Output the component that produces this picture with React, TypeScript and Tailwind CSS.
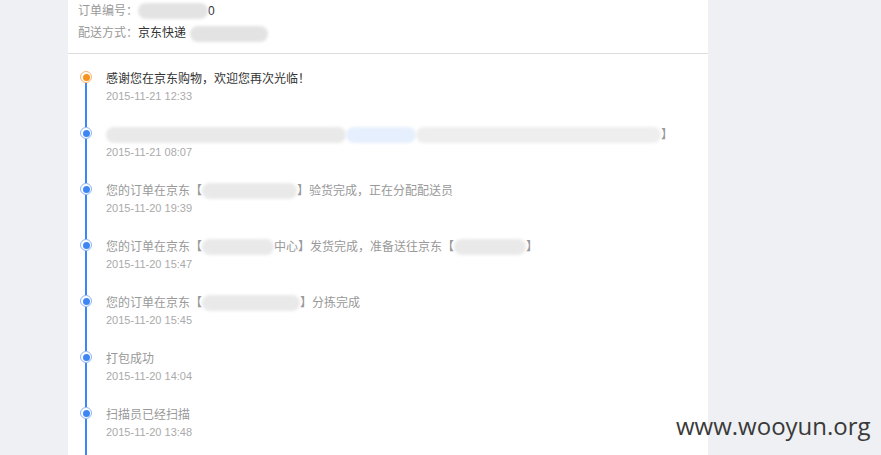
import React from 'react';

interface Step {
  time: string;
  content: React.ReactNode;
  active?: boolean;
}

const Blur: React.FC<{ w: number; tint?: string }> = ({ w, tint }) => (
  <span
    className={`inline-block h-[16px] rounded-full blur-[1.5px] align-middle ${tint ?? 'bg-[#e9e9e9]'}`}
    style={{ width: w }}
  />
);

const steps: Step[] = [
  { time: '2015-11-21 12:33', content: '感谢您在京东购物，欢迎您再次光临！', active: true },
  {
    time: '2015-11-21 08:07',
    content: (
      <>
        <Blur w={240} />
        <Blur w={70} tint="bg-[#e6effd]" />
        <Blur w={245} tint="bg-[#eeeeee]" />
        <span>】</span>
      </>
    ),
  },
  {
    time: '2015-11-20 19:39',
    content: (
      <>
        您的订单在京东【<Blur w={95} />】验货完成，正在分配配送员
      </>
    ),
  },
  {
    time: '2015-11-20 15:47',
    content: (
      <>
        您的订单在京东【<Blur w={72} />中心】发货完成，准备送往京东【<Blur w={72} />】
      </>
    ),
  },
  {
    time: '2015-11-20 15:45',
    content: (
      <>
        您的订单在京东【<Blur w={98} />】分拣完成
      </>
    ),
  },
  { time: '2015-11-20 14:04', content: '打包成功' },
  { time: '2015-11-20 13:48', content: '扫描员已经扫描' },
];

const Dot: React.FC<{ orange?: boolean }> = ({ orange }) => (
  <div
    className={`w-[12px] h-[12px] rounded-full border-[1.5px] bg-white flex items-center justify-center ${
      orange ? 'border-[#f9b36a]' : 'border-[#8ab4f8]'
    }`}
  >
    <div className={`w-[7px] h-[7px] rounded-full ${orange ? 'bg-[#f7931d]' : 'bg-[#3d86f5]'}`} />
  </div>
);

export default function App() {
  return (
    <div
      className="relative w-[881px] h-[455px] bg-[#eef0f3] overflow-hidden flex"
      style={{ fontFamily: '"Liberation Sans", Arial, "Noto Sans CJK SC", sans-serif' }}
    >
      <div className="ml-[68px] w-[640px] h-full bg-white flex flex-col">
        {/* Order info */}
        <div className="h-[54px] shrink-0 px-[10px] border-b border-[#dddddd] text-[12px] text-[#999]">
          <div className="h-[22px] leading-[22px] flex items-center">
            <span>订单编号：</span>
            <Blur w={70} tint="bg-[#e3e3e3]" />
            <span className="text-[#333]">0</span>
          </div>
          <div className="h-[22px] leading-[22px] flex items-center">
            <span>配送方式：</span>
            <span className="text-[#333]">京东快递</span>
            <span className="ml-[4px]">
              <Blur w={78} tint="bg-[#e3e3e3]" />
            </span>
          </div>
        </div>

        {/* Timeline */}
        <div className="pl-[12px] flex-1 flex flex-col">
          {steps.map((s, i) => (
            <div key={i} className="flex h-[56px] shrink-0">
              <div className="w-[12px] flex flex-col items-center">
                <div className={`w-[2px] h-[17px] ${i === 0 ? 'bg-transparent' : 'bg-[#3d86f5]'}`} />
                <Dot orange={s.active} />
                <div className="w-[2px] flex-1 bg-[#3d86f5]" />
              </div>
              <div className="ml-[14px] pt-[15px]">
                <div
                  className={`h-[20px] leading-[20px] text-[12px] whitespace-nowrap flex items-center ${
                    s.active ? 'text-[#333]' : 'text-[#999]'
                  }`}
                >
                  {s.content}
                </div>
                <div className="-mt-[1px] h-[16px] leading-[16px] text-[11px] text-[#aaa]">{s.time}</div>
              </div>
            </div>
          ))}
          <div className="w-[12px] flex-1 flex justify-center">
            <div className="w-[2px] h-full bg-[#3d86f5]" />
          </div>
        </div>
      </div>

      <div
        className="absolute left-[676px] top-[411px] text-[24px] leading-[30px] text-[#3a3a3a]"
        style={{ fontFamily: '"Open Sans", sans-serif' }}
      >
        www.wooyun.org
      </div>
    </div>
  );
}
